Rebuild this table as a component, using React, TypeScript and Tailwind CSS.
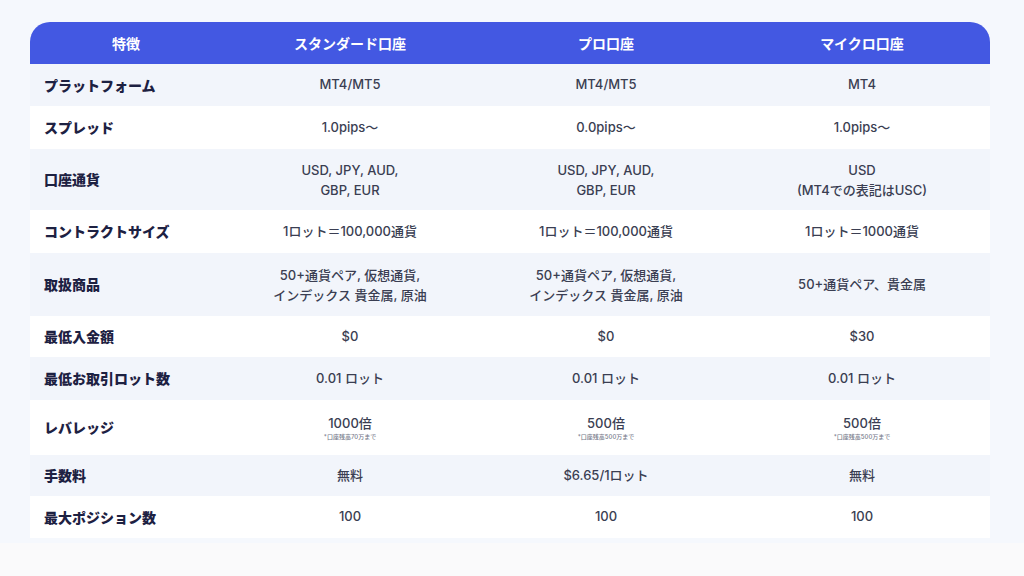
import React from "react";

type Row = { label: string; h: string; cells: React.ReactNode[]; light: boolean };

const Note = ({ main, note }: { main: string; note: string }) => (
  <div className="flex flex-col items-center leading-none">
    <span className="text-[13px] leading-[18px]">{main}</span>
    <span className="text-[6px] leading-[10px] text-[#75798a]">{note}</span>
  </div>
);

const Two = ({ a, b }: { a: string; b: string }) => (
  <div className="flex flex-col items-center text-[13px] leading-[20px]">
    <span>{a}</span>
    <span>{b}</span>
  </div>
);

const rows: Row[] = [
  { label: "プラットフォーム", h: "h-[42px]", light: true, cells: ["MT4/MT5", "MT4/MT5", "MT4"] },
  { label: "スプレッド", h: "h-[43px]", light: false, cells: ["1.0pips〜", "0.0pips〜", "1.0pips〜"] },
  {
    label: "口座通貨",
    h: "h-[61px]",
    light: true,
    cells: [
      <Two a="USD, JPY, AUD," b="GBP, EUR" />,
      <Two a="USD, JPY, AUD," b="GBP, EUR" />,
      <Two a="USD" b="(MT4での表記はUSC)" />,
    ],
  },
  { label: "コントラクトサイズ", h: "h-[43px]", light: false, cells: ["1ロット＝100,000通貨", "1ロット＝100,000通貨", "1ロット＝1000通貨"] },
  {
    label: "取扱商品",
    h: "h-[63px]",
    light: true,
    cells: [
      <Two a="50+通貨ペア, 仮想通貨," b="インデックス 貴金属, 原油" />,
      <Two a="50+通貨ペア, 仮想通貨," b="インデックス 貴金属, 原油" />,
      "50+通貨ペア、貴金属",
    ],
  },
  { label: "最低入金額", h: "h-[41px]", light: false, cells: ["$0", "$0", "$30"] },
  { label: "最低お取引ロット数", h: "h-[43px]", light: true, cells: ["0.01 ロット", "0.01 ロット", "0.01 ロット"] },
  {
    label: "レバレッジ",
    h: "h-[55px]",
    light: false,
    cells: [
      <Note main="1000倍" note="*口座残高70万まで" />,
      <Note main="500倍" note="*口座残高500万まで" />,
      <Note main="500倍" note="*口座残高500万まで" />,
    ],
  },
  { label: "手数料", h: "h-[41px]", light: true, cells: ["無料", "$6.65/1ロット", "無料"] },
  { label: "最大ポジション数", h: "h-[42px]", light: false, cells: ["100", "100", "100"] },
];

export default function App() {
  return (
    <div
      className="w-[1024px] h-[576px] bg-[#fafafb] overflow-hidden"
      style={{ fontFamily: 'Inter, "Noto Sans CJK JP", "Noto Sans", sans-serif' }}
    >
      <div className="h-[543px] bg-[#f5f8fd] pt-[22px] pl-[30px]">
        <div className="w-[960px]">
          <div className="grid grid-cols-[192px_256px_256px_256px] h-[42px] bg-[#4358e2] rounded-t-[20px] text-white font-bold text-[14px]">
            {["特徴", "スタンダード口座", "プロ口座", "マイクロ口座"].map((t) => (
              <div key={t} className="flex items-center justify-center">
                {t}
              </div>
            ))}
          </div>
          {rows.map((r) => (
            <div
              key={r.label}
              className={`grid grid-cols-[192px_256px_256px_256px] ${r.h} ${r.light ? "bg-[#f2f5fb]" : "bg-white"}`}
            >
              <div className="flex items-center pl-[14px] text-[14px] font-extrabold text-[#1d2142]">{r.label}</div>
              {r.cells.map((c, i) => (
                <div key={i} className="flex items-center justify-center text-[13px] font-medium text-[#3a3e52]">
                  {c}
                </div>
              ))}
            </div>
          ))}
        </div>
      </div>
    </div>
  );
}
